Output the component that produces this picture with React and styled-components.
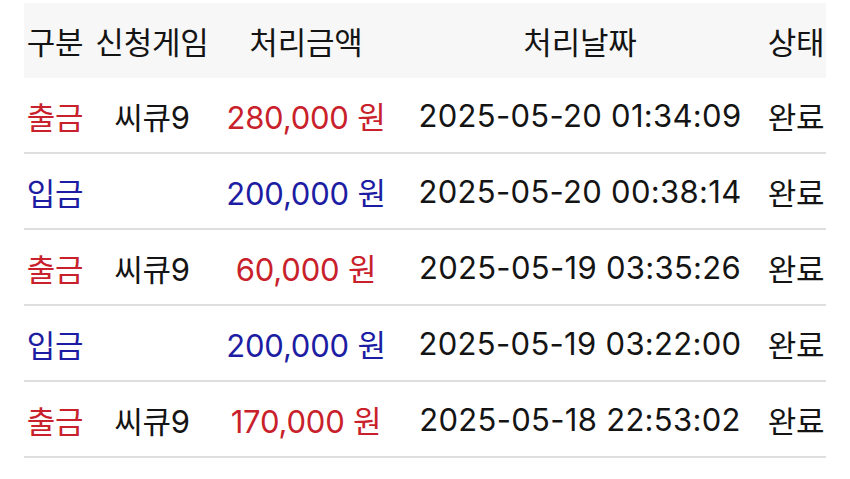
import React from 'react';
import styled, { createGlobalStyle } from 'styled-components';

const GlobalStyle = createGlobalStyle`
  html, body {
    margin: 0;
    background: #ffffff;
  }
  body {
    font-family: Inter, "Noto Sans CJK KR", sans-serif;
    color: #111111;
  }
`;

const Page = styled.div`
  padding: 3px 24px 0 24px;
`;

const Table = styled.div`
  width: 802px;
  display: flex;
  flex-direction: column;
`;

const columns = '62px 132px 176px 372px 60px';

const HeaderRow = styled.div`
  display: grid;
  grid-template-columns: ${columns};
  height: 75px;
  align-items: center;
  background: #f7f7f7;
`;

const Row = styled.div`
  display: grid;
  grid-template-columns: ${columns};
  height: 74px;
  align-items: center;
  border-bottom: 2px solid #dedede;
`;

const Cell = styled.div`
  font-size: 31px;
  text-align: center;
  white-space: nowrap;
  letter-spacing: ${(props) => (props.$wide ? '0.3px' : '-0.2px')};
  color: ${(props) => props.$color || '#141414'};
`;

const RED = '#c8212b';
const BLUE = '#1d1da3';

const rows = [
  { type: '출금', game: '씨큐9', amount: '280,000 원', date: '2025-05-20 01:34:09' },
  { type: '입금', game: '', amount: '200,000 원', date: '2025-05-20 00:38:14' },
  { type: '출금', game: '씨큐9', amount: '60,000 원', date: '2025-05-19 03:35:26' },
  { type: '입금', game: '', amount: '200,000 원', date: '2025-05-19 03:22:00' },
  { type: '출금', game: '씨큐9', amount: '170,000 원', date: '2025-05-18 22:53:02' },
];

const App = () => (
  <>
    <GlobalStyle />
    <Page>
      <Table>
        <HeaderRow>
          <Cell>구분</Cell>
          <Cell>신청게임</Cell>
          <Cell>처리금액</Cell>
          <Cell>처리날짜</Cell>
          <Cell>상태</Cell>
        </HeaderRow>
        {rows.map((row, i) => {
          const color = row.type === '출금' ? RED : BLUE;
          return (
            <Row key={i}>
              <Cell $color={color}>{row.type}</Cell>
              <Cell>{row.game}</Cell>
              <Cell $color={color}>{row.amount}</Cell>
              <Cell $wide>{row.date}</Cell>
              <Cell>완료</Cell>
            </Row>
          );
        })}
      </Table>
    </Page>
  </>
);

export default App;
